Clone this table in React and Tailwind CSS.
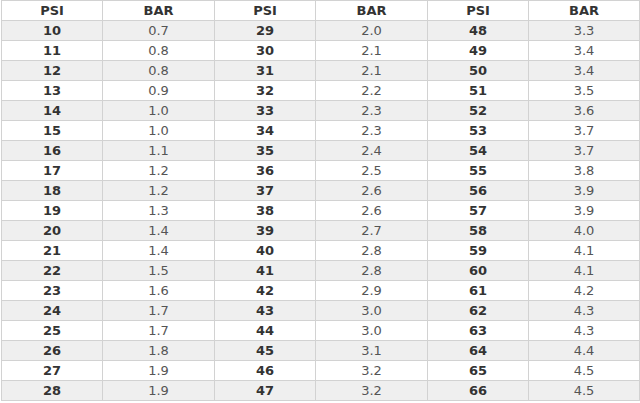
import React from "react";

const c1 = ["0.7","0.8","0.8","0.9","1.0","1.0","1.1","1.2","1.2","1.3","1.4","1.4","1.5","1.6","1.7","1.7","1.8","1.9","1.9"];
const c2 = ["2.0","2.1","2.1","2.2","2.3","2.3","2.4","2.5","2.6","2.6","2.7","2.8","2.8","2.9","3.0","3.0","3.1","3.2","3.2"];
const c3 = ["3.3","3.4","3.4","3.5","3.6","3.7","3.7","3.8","3.9","3.9","4.0","4.1","4.1","4.2","4.3","4.3","4.4","4.5","4.5"];

export default function App() {
  return (
    <div className="bg-white w-[640px] h-[403px] overflow-hidden pl-px" style={{ fontFamily: '"DejaVu Sans", Verdana, sans-serif' }}>
      <table className="table-fixed border-collapse text-[13px]">
        <colgroup>
          <col className="w-[101px]" />
          <col className="w-[112px]" />
          <col className="w-[101px]" />
          <col className="w-[112px]" />
          <col className="w-[101px]" />
          <col className="w-[111px]" />
        </colgroup>
        <thead>
          <tr className="h-[20px] bg-white">
            {["PSI","BAR","PSI","BAR","PSI","BAR"].map((h, i) => (
              <th key={i} className="border border-[#d2d2d2] p-0 text-center font-bold text-[#333] leading-none">{h}</th>
            ))}
          </tr>
        </thead>
        <tbody>
          {c1.map((_, r) => (
            <tr key={r} className={r % 2 === 0 ? "h-[20px] bg-[#efefef]" : "h-[20px] bg-white"}>
              <td className="border border-[#d2d2d2] p-0 text-center font-bold text-[#333] leading-none">{10 + r}</td>
              <td className="border border-[#d2d2d2] p-0 text-center text-[#555] leading-none">{c1[r]}</td>
              <td className="border border-[#d2d2d2] p-0 text-center font-bold text-[#333] leading-none">{29 + r}</td>
              <td className="border border-[#d2d2d2] p-0 text-center text-[#555] leading-none">{c2[r]}</td>
              <td className="border border-[#d2d2d2] p-0 text-center font-bold text-[#333] leading-none">{48 + r}</td>
              <td className="border border-[#d2d2d2] p-0 text-center text-[#555] leading-none">{c3[r]}</td>
            </tr>
          ))}
        </tbody>
      </table>
    </div>
  );
}
